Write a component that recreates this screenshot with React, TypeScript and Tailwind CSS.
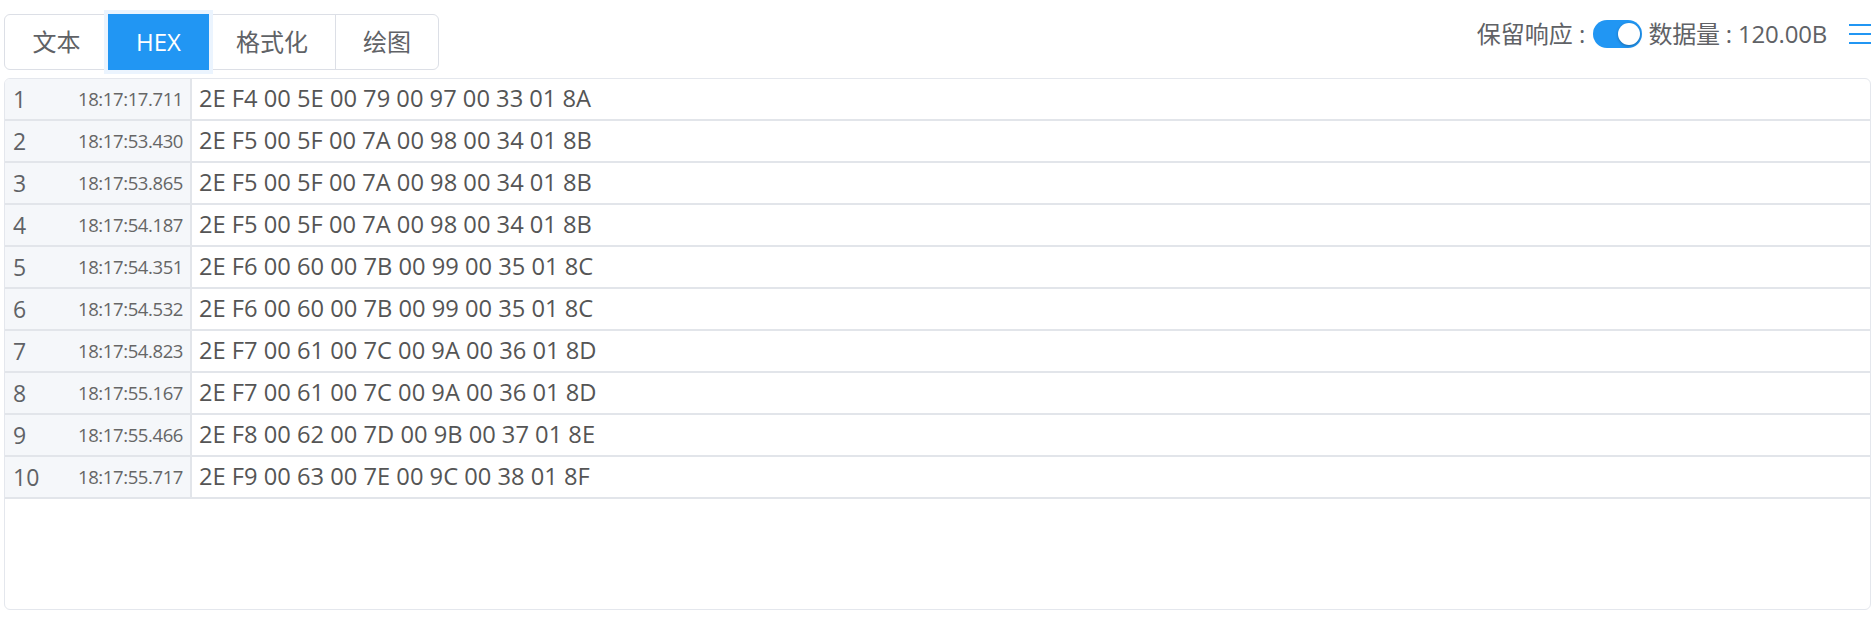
import React from "react";

const rows = [
  ["18:17:17.711", "2E F4 00 5E 00 79 00 97 00 33 01 8A"],
  ["18:17:53.430", "2E F5 00 5F 00 7A 00 98 00 34 01 8B"],
  ["18:17:53.865", "2E F5 00 5F 00 7A 00 98 00 34 01 8B"],
  ["18:17:54.187", "2E F5 00 5F 00 7A 00 98 00 34 01 8B"],
  ["18:17:54.351", "2E F6 00 60 00 7B 00 99 00 35 01 8C"],
  ["18:17:54.532", "2E F6 00 60 00 7B 00 99 00 35 01 8C"],
  ["18:17:54.823", "2E F7 00 61 00 7C 00 9A 00 36 01 8D"],
  ["18:17:55.167", "2E F7 00 61 00 7C 00 9A 00 36 01 8D"],
  ["18:17:55.466", "2E F8 00 62 00 7D 00 9B 00 37 01 8E"],
  ["18:17:55.717", "2E F9 00 63 00 7E 00 9C 00 38 01 8F"],
];

const tabs = [
  { label: "文本", w: "w-[103px]" },
  { label: "HEX", w: "w-[101px]", active: true },
  { label: "格式化", w: "w-[126px]" },
  { label: "绘图", w: "w-[103px]" },
];

export default function App() {
  return (
    <div
      className="w-[1875px] h-[619px] bg-white px-[4px] text-[#606266]"
      style={{ fontFamily: '"Open Sans", "Noto Sans CJK SC", sans-serif' }}
    >
      <div className="flex items-start justify-between h-[78px]">
        <div className="mt-[14px] flex h-[56px] border border-[#dcdfe6] rounded-[6px] text-[24px]">
          {tabs.map((t, i) => (
            <div
              key={t.label}
              className={
                "flex items-center justify-center " +
                t.w +
                (t.active
                  ? " bg-[#2196f3] text-white shadow-[0_0_0_4px_#ebf4fe] -my-px"
                  : "") +
                (i > 0 && !t.active && !tabs[i - 1].active ? " border-l border-[#dcdfe6]" : "")
              }
            >
              {t.label}
            </div>
          ))}
        </div>
        <div className="mt-[20px] flex items-center text-[24px] leading-[28px]">
          <span>保留响应 :</span>
          <div className="ml-[8px] relative w-[49px] h-[28px] rounded-full bg-[#2196f3]">
            <div className="absolute right-[2px] top-[3px] w-[22px] h-[22px] rounded-full bg-white shadow-[0_1px_3px_rgba(0,0,0,0.3)]" />
          </div>
          <span className="ml-[6px] tracking-[-0.2px]">数据量 : 120.00B</span>
          <div className="ml-[22px] flex flex-col gap-[7px] w-[22px]">
            <div className="h-[2px] bg-[#2196f3]" />
            <div className="h-[2px] bg-[#2196f3]" />
            <div className="h-[2px] bg-[#2196f3]" />
          </div>
        </div>
      </div>
      <div className="h-[532px] border border-[#e4e7ed] rounded-[6px] overflow-hidden">
        {rows.map((r, i) => (
          <div key={i} className="flex h-[42px] border-b-2 border-[#e2e5ea]">
            <div className="w-[187px] flex items-center justify-between bg-[#f5f7fa] border-r-2 border-[#e2e5ea] pl-[8px] pr-[7px]">
              <span className="text-[23px] text-[#606266]">{i + 1}</span>
              <span className="text-[18.5px] text-[#666] tracking-[-0.4px]">{r[0]}</span>
            </div>
            <div className="flex items-center pl-[7px] text-[23.7px] text-[#555]">{r[1]}</div>
          </div>
        ))}
      </div>
    </div>
  );
}
